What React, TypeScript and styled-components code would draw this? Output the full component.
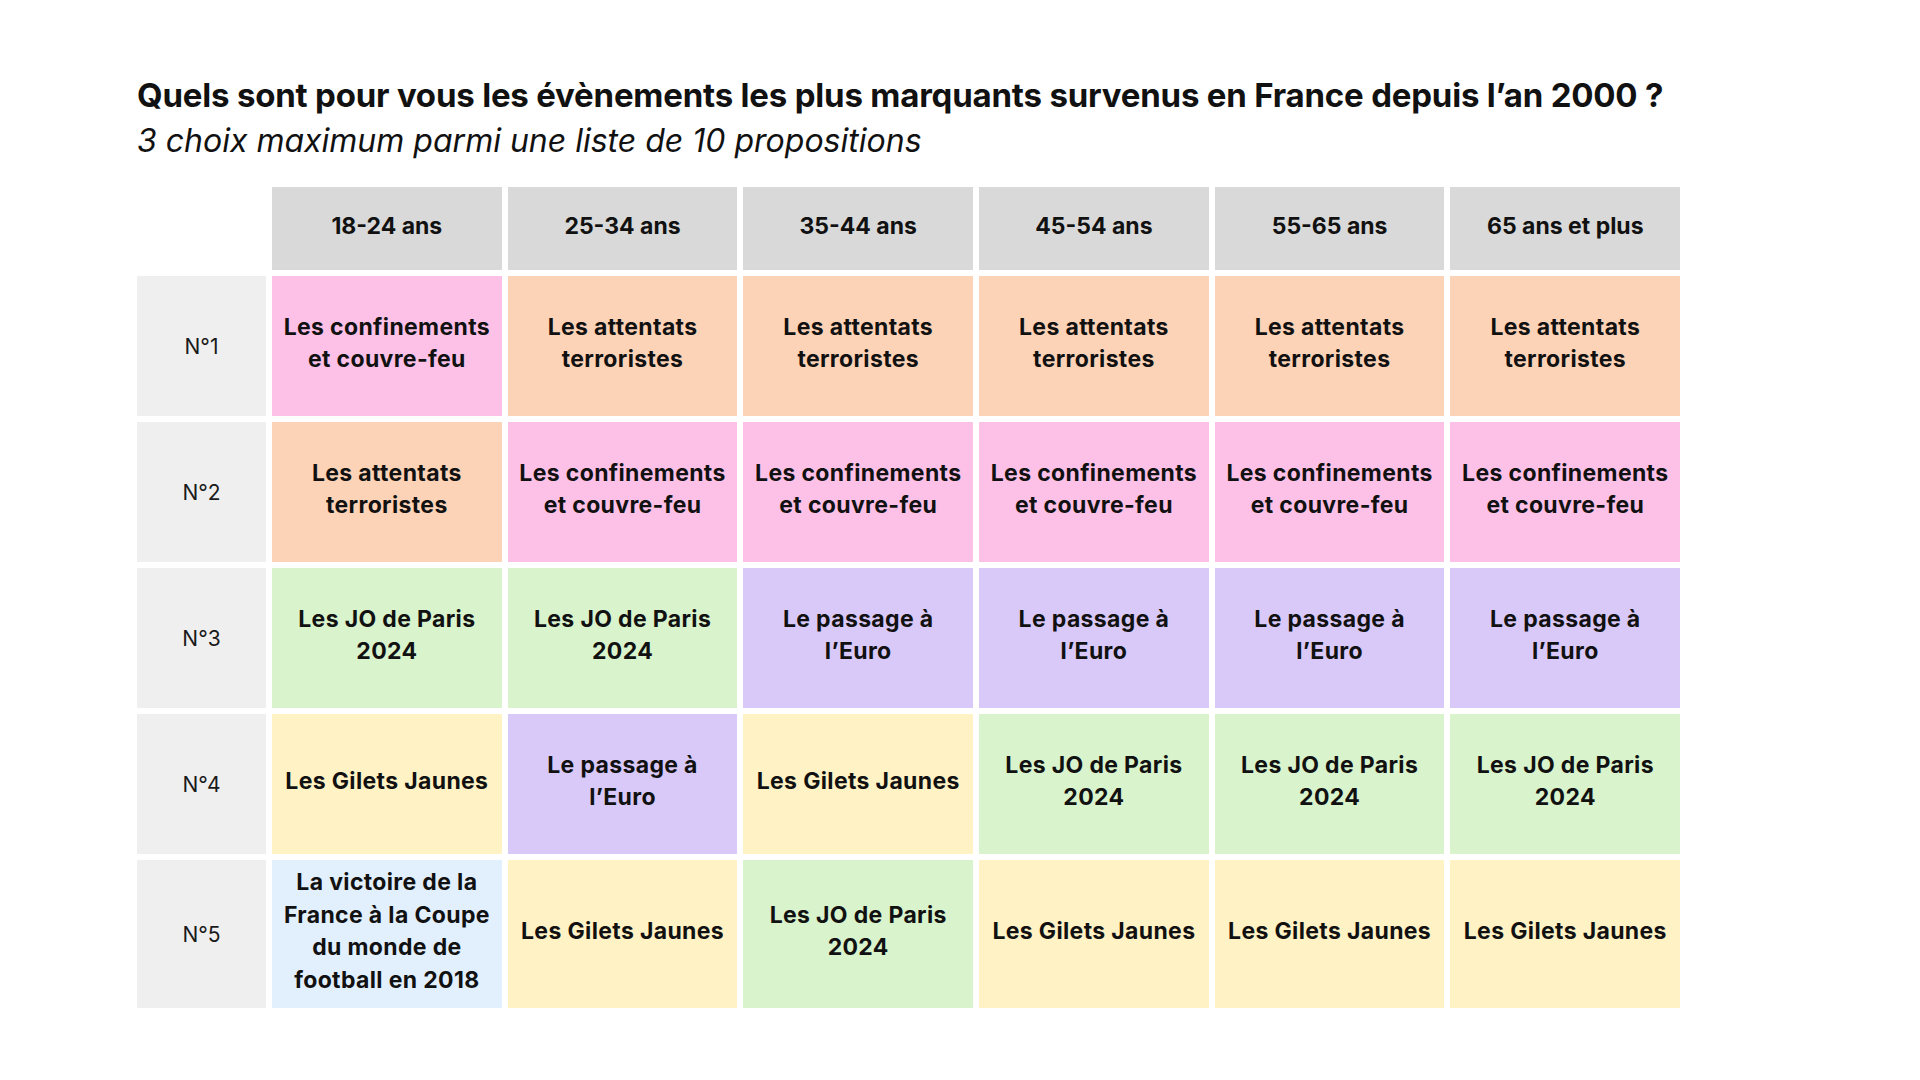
import React from 'react';
import styled, { createGlobalStyle } from 'styled-components';

const GlobalStyle = createGlobalStyle`
  html, body {
    margin: 0;
    padding: 0;
    background: #ffffff;
  }
  body {
    font-family: Inter, "Noto Sans", sans-serif;
    color: #111111;
  }
`;

type Tone = 'pink' | 'peach' | 'green' | 'purple' | 'yellow' | 'blue';

const tones: Record<Tone, string> = {
  pink: '#fdc1e8',
  peach: '#fdd3b7',
  green: '#d9f3cd',
  purple: '#d9c9f9',
  yellow: '#fff2c4',
  blue: '#e2effd',
};

const Page = styled.main`
  padding: 75px 0 0 137px;
`;

const Title = styled.h1`
  margin: 0;
  font-size: 33px;
  line-height: 40px;
  font-weight: 700;
  letter-spacing: -0.2px;
`;

const Subtitle = styled.p`
  margin: 6px 0 0;
  font-size: 32px;
  line-height: 40px;
  font-weight: 400;
  font-style: italic;
`;

const Table = styled.div`
  margin-top: 26px;
  display: grid;
  grid-template-columns: 129px repeat(6, 229.7px);
  grid-template-rows: 83px repeat(4, 140px) 148px;
  gap: 6px;
`;

const Corner = styled.div`
  background: transparent;
`;

const HeadCell = styled.div`
  background: #d9d9d9;
  display: flex;
  align-items: center;
  justify-content: center;
  font-size: 23px;
  font-weight: 700;
  padding-bottom: 6px;
`;

const RankCell = styled.div`
  background: #efefef;
  display: flex;
  align-items: center;
  justify-content: center;
  font-size: 21px;
  font-weight: 400;
  color: #1a1a1a;
`;

const EventCell = styled.div<{ $tone: Tone }>`
  background: ${(p) => tones[p.$tone]};
  display: flex;
  align-items: center;
  justify-content: center;
  text-align: center;
  padding: 0 4px 6px;
  font-size: 23px;
  line-height: 32.5px;
  font-weight: 700;
  letter-spacing: 0.35px;
`;

const ages = ['18-24 ans', '25-34 ans', '35-44 ans', '45-54 ans', '55-65 ans', '65 ans et plus'];

const events: Record<Tone, React.ReactNode> = {
  pink: (
    <>
      Les confinements
      <br />
      et couvre-feu
    </>
  ),
  peach: (
    <>
      Les attentats
      <br />
      terroristes
    </>
  ),
  green: (
    <>
      Les JO de Paris
      <br />
      2024
    </>
  ),
  purple: (
    <>
      Le passage à
      <br />
      l’Euro
    </>
  ),
  yellow: <>Les Gilets Jaunes</>,
  blue: (
    <>
      La victoire de la
      <br />
      France à la Coupe
      <br />
      du monde de
      <br />
      football en 2018
    </>
  ),
};

const ranking: Tone[][] = [
  ['pink', 'peach', 'peach', 'peach', 'peach', 'peach'],
  ['peach', 'pink', 'pink', 'pink', 'pink', 'pink'],
  ['green', 'green', 'purple', 'purple', 'purple', 'purple'],
  ['yellow', 'purple', 'yellow', 'green', 'green', 'green'],
  ['blue', 'yellow', 'green', 'yellow', 'yellow', 'yellow'],
];

const App = () => {
  return (
    <>
      <GlobalStyle />
      <Page>
        <Title>Quels sont pour vous les évènements les plus marquants survenus en France depuis l’an 2000 ?</Title>
        <Subtitle>3 choix maximum parmi une liste de 10 propositions</Subtitle>

        <Table>
          <Corner />
          {ages.map((age) => (
            <HeadCell key={age}>{age}</HeadCell>
          ))}

          {ranking.map((row, i) => (
            <React.Fragment key={i}>
              <RankCell>N°{i + 1}</RankCell>
              {row.map((tone, j) => (
                <EventCell key={j} $tone={tone}>
                  {events[tone]}
                </EventCell>
              ))}
            </React.Fragment>
          ))}
        </Table>
      </Page>
    </>
  );
};

export default App;
